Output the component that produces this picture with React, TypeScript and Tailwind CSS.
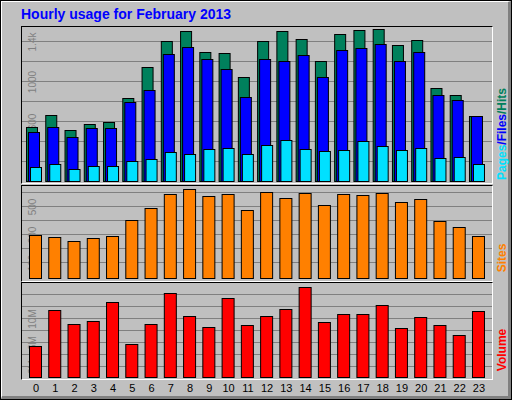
const hits = [126, 114, 129, 123, 121, 97, 66, 40, 30, 51, 52, 76, 40, 30, 38, 60, 33, 29, 28, 44, 39, 87, 94, 115];
const files = [131, 126, 136, 127, 127, 101, 89, 53, 46, 58, 68, 96, 58, 60, 54, 76, 49, 47, 43, 60, 51, 94, 99, 115];
const pages = [166, 163, 168, 165, 165, 160, 158, 151, 153, 148, 147, 153, 144, 139, 148, 150, 149, 140, 145, 149, 147, 157, 156, 163];
const sites = [234, 236, 240, 237, 235, 219, 207, 193, 188, 195, 193, 209, 191, 197, 192, 204, 193, 194, 192, 201, 198, 220, 226, 235];
const volume = [345, 309, 323, 320, 301, 343, 323, 292, 315, 326, 297, 324, 315, 308, 286, 321, 313, 313, 304, 327, 316, 324, 334, 310];

const base = (i: number) => 25 + i * 19.26;

function Bar({ x, top, bottom, w, fill }: { x: number; top: number; bottom: number; w: number; fill: string }) {
  return <rect x={x + 0.5} y={top + 0.5} width={w} height={bottom - top} fill={fill} stroke="#000" strokeWidth={1} />;
}

function Grid({ ys }: { ys: number[] }) {
  return (
    <>
      {ys.map((y) => (
        <line key={y} x1={21} x2={491} y1={y + 0.5} y2={y + 0.5} stroke="#808080" strokeWidth={1} />
      ))}
    </>
  );
}

function AxisLabel({ y, text }: { y: number; text: string }) {
  return (
    <text x={0} y={0} transform={`translate(35 ${y}) rotate(-90)`} fontSize={10} fill="#808080" textAnchor="middle" fontFamily="Liberation Sans, sans-serif">
      {text}
    </text>
  );
}

function Panel({ top, h, children }: { top: number; h: number; children: React.ReactNode }) {
  return (
    <div className="border-t border-l border-black border-r border-b border-r-white border-b-white" style={{ height: h }}>
      <svg width={470} height={h - 2} viewBox={`21 ${top + 1} 470 ${h - 2}`} className="block">
        {children}
      </svg>
    </div>
  );
}

export default function App() {
  return (
    <div className="w-[512px] h-[400px] bg-black p-px" style={{ fontFamily: "Liberation Sans, sans-serif" }}>
      <div className="w-full h-full bg-[#c0c0c0] border-t border-l border-white border-b-[3px] border-r-[3px] border-b-[#808080] border-r-[#808080] relative">
        <div className="absolute left-[19px] top-[5px] text-[14px] font-bold text-[#0000ff] leading-none">Hourly usage for February 2013</div>
        <div className="absolute left-[19px] top-[24px] flex flex-col w-[472px]">
          <Panel top={25} h={158}>
            <Grid ys={[40, 60, 80, 100, 120, 140, 160]} />
            <AxisLabel y={161} text="200" />
            <AxisLabel y={121} text="600" />
            <AxisLabel y={81} text="1000" />
            <AxisLabel y={41} text="1.4k" />
            {hits.map((t, i) => (
              <g key={i}>
                <Bar x={base(i)} top={t} bottom={180} w={11} fill="#00805c" />
                <Bar x={base(i) + 2} top={files[i]} bottom={180} w={11} fill="#0000ff" />
                <Bar x={base(i) + 4} top={pages[i]} bottom={180} w={11} fill="#00e0ff" />
              </g>
            ))}
          </Panel>
          <div className="h-px" />
          <Panel top={184} h={97}>
            <Grid ys={[191, 205, 219, 233, 247, 261]} />
            <AxisLabel y={262} text="100" />
            <AxisLabel y={234} text="300" />
            <AxisLabel y={206} text="500" />
            {sites.map((t, i) => (
              <Bar key={i} x={base(i) + 3} top={t} bottom={277} w={12} fill="#ff8000" />
            ))}
          </Panel>
          <Panel top={281} h={98}>
            <Grid ys={[293, 305, 317, 329, 341, 353, 365]} />
            <AxisLabel y={366} text="2M" />
            <AxisLabel y={342} text="6M" />
            <AxisLabel y={318} text="10M" />
            {volume.map((t, i) => (
              <Bar key={i} x={base(i) + 3} top={t} bottom={376} w={12} fill="#ff0000" />
            ))}
          </Panel>
          <div className="relative h-[14px]">
            {hits.map((_, i) => (
              <span key={i} className="absolute top-[3px] text-[11px] leading-none text-black -translate-x-1/2" style={{ left: base(i) + 9 - 19 }}>
                {i}
              </span>
            ))}
          </div>
        </div>
        <div className="absolute left-[493px] top-[86px] w-[14px] h-[92px] flex items-center justify-center">
          <div className="-rotate-90 whitespace-nowrap text-[12px] font-bold leading-none">
            <span className="text-[#00e0ff]">Pages</span>
            <span className="text-[#0000ff]">/Files</span>
            <span className="text-[#00805c]">/Hits</span>
          </div>
        </div>
        <div className="absolute left-[493px] top-[236px] w-[14px] h-[40px] flex items-center justify-center">
          <div className="-rotate-90 whitespace-nowrap text-[12px] font-bold leading-none text-[#ff8000]">Sites</div>
        </div>
        <div className="absolute left-[493px] top-[320px] w-[14px] h-[56px] flex items-center justify-center">
          <div className="-rotate-90 whitespace-nowrap text-[12px] font-bold leading-none text-[#ff0000]">Volume</div>
        </div>
      </div>
    </div>
  );
}
